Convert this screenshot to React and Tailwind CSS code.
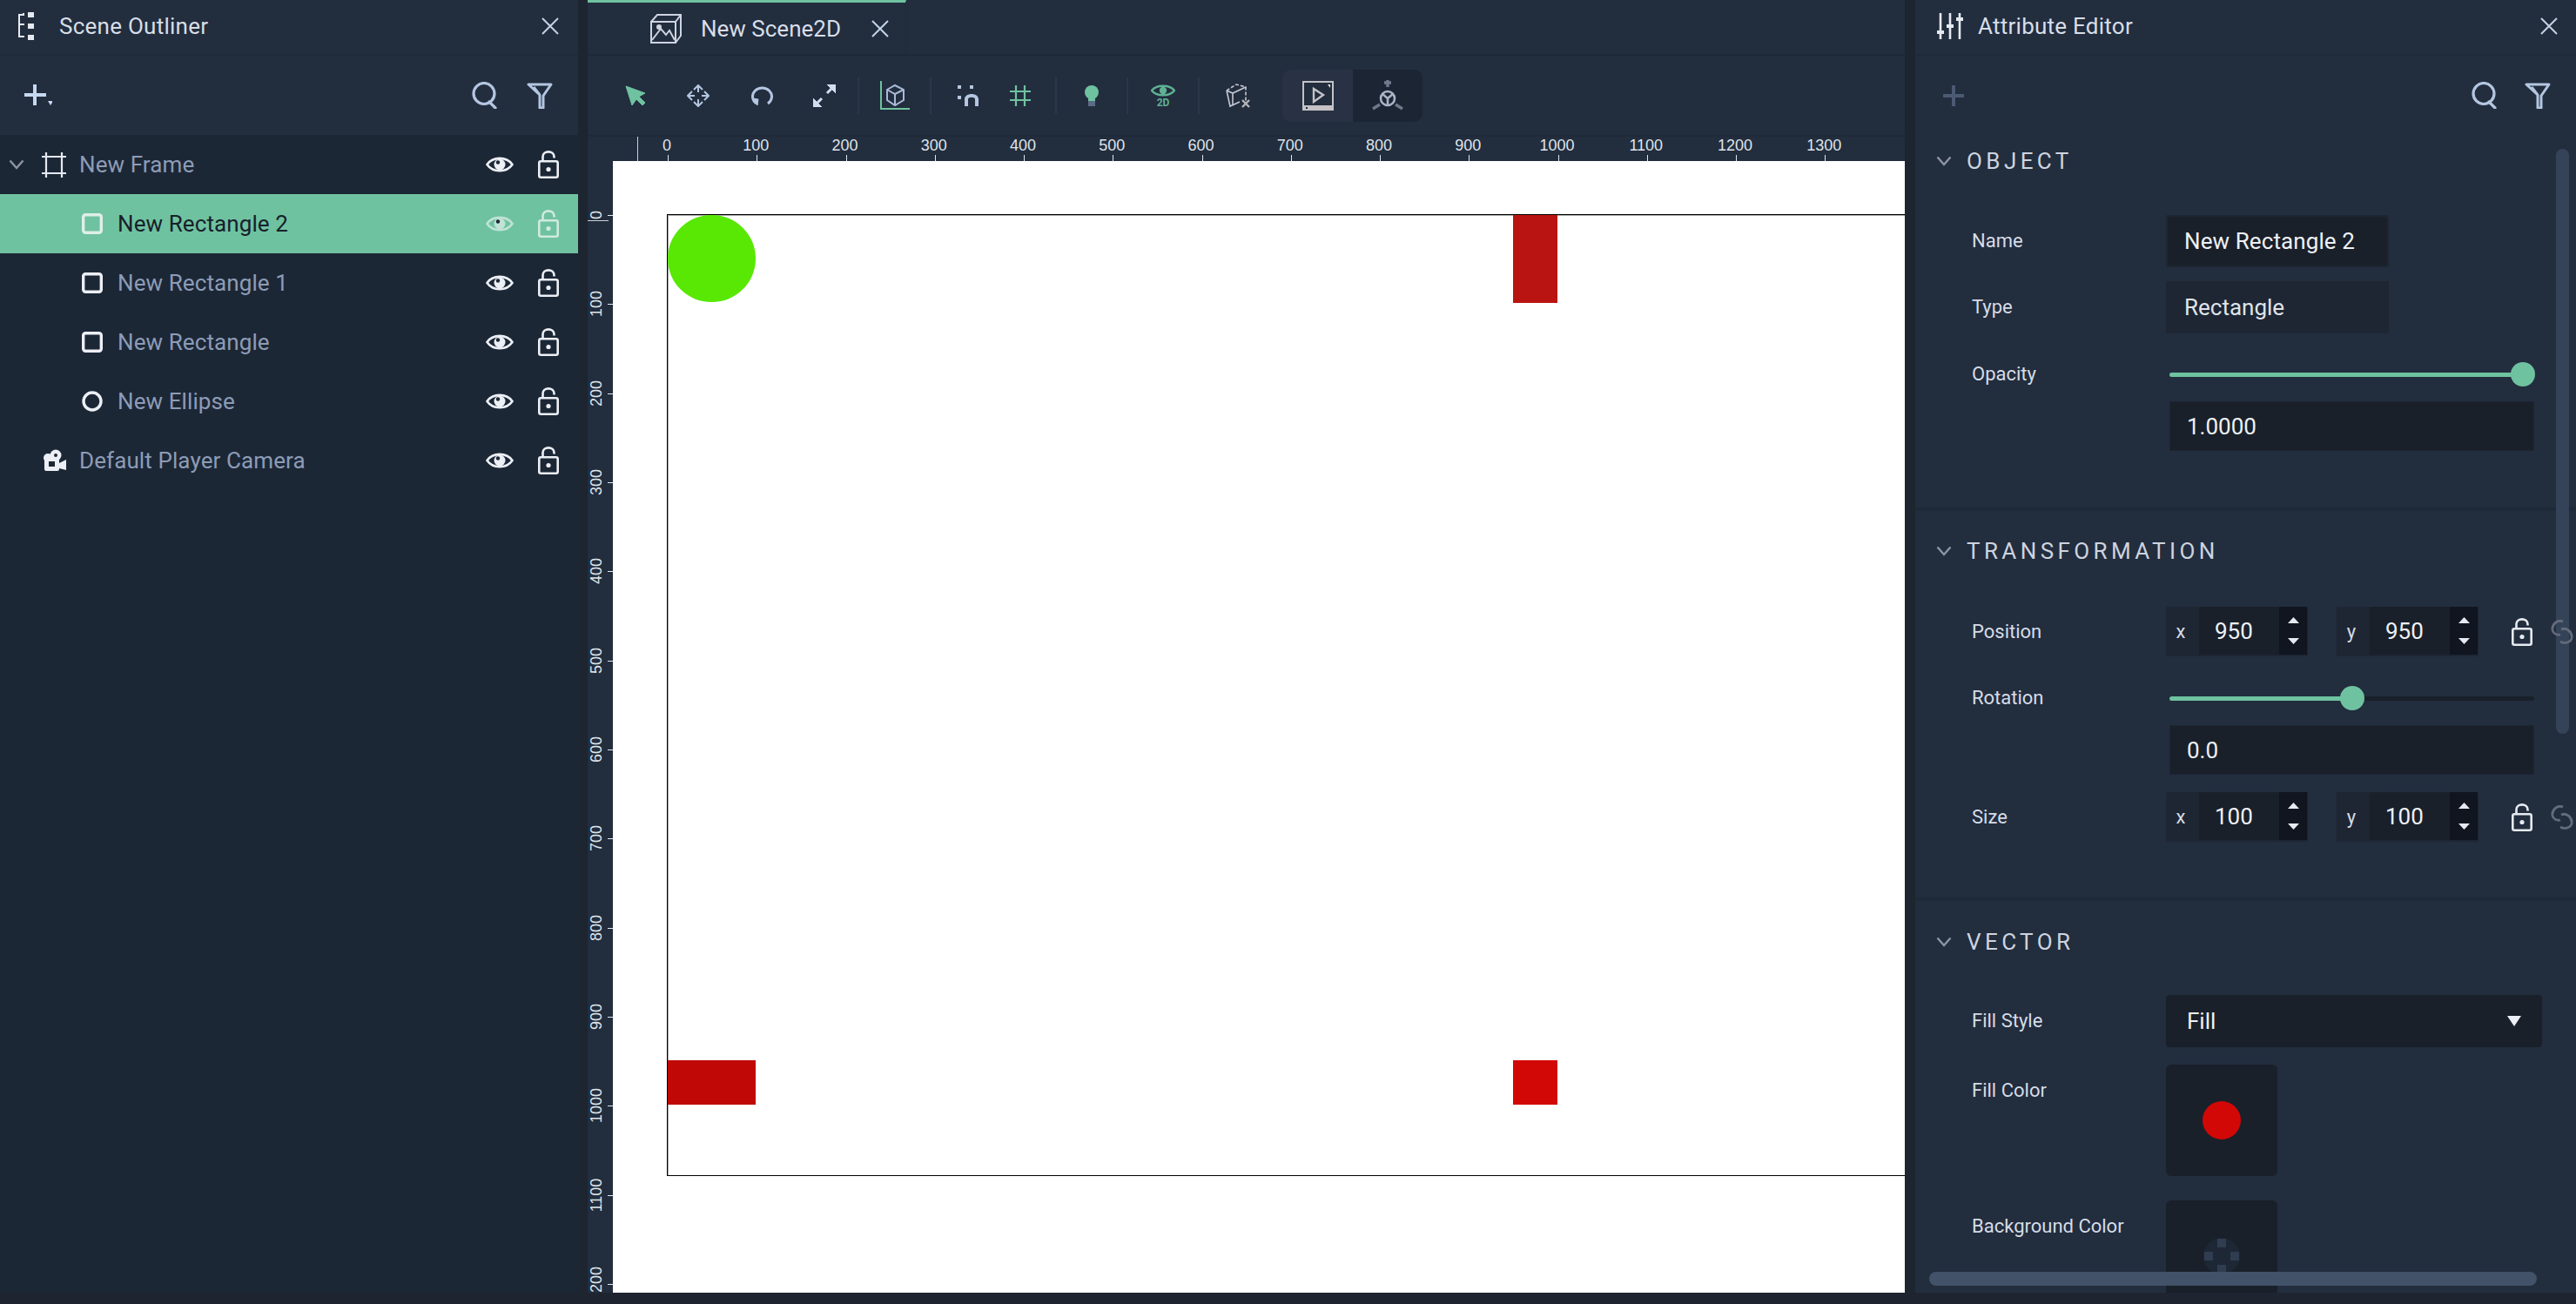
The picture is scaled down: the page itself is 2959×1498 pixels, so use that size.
import React from 'react';

const rulerX = [0, 100, 200, 300, 400, 500, 600, 700, 800, 900, 1000, 1100, 1200, 1300];
const rulerY = [0, 100, 200, 300, 400, 500, 600, 700, 800, 900, 1000, 1100, 1200];

function CloseIcon({ className }) {
    return (
        <svg width="22" height="20" viewBox="0 0 22 20" className={className} fill="none" stroke="currentColor" strokeWidth="2">
            <path d="M2 1 L20 19 M20 1 L2 19" />
        </svg>
    );
}

function SearchIcon() {
    return (
        <svg width="30" height="31" viewBox="0 0 30 31" fill="none" stroke="#b4c6e0" strokeWidth="3.2">
            <circle cx="14" cy="13.5" r="12" />
            <path d="M20 23 L27 30" strokeLinecap="round" />
        </svg>
    );
}

function FilterIcon() {
    return (
        <svg width="30" height="30" viewBox="0 0 30 30" fill="none" stroke="#b4c6e0" strokeWidth="3">
            <path d="M2 2 H28 L19 15 V29 H15 V14 Z M8 5 L15 14" strokeLinejoin="round" />
        </svg>
    );
}

function EyeIcon({ color = '#eceff5' }) {
    return (
        <svg width="32" height="22" viewBox="0 0 32 22" fill="none">
            <path d="M1.5 11 C8 1.5 24 1.5 30.5 11 C24 20.5 8 20.5 1.5 11 Z" stroke={color} strokeWidth="2.6" />
            <circle cx="16" cy="11" r="6.5" fill={color} />
            <circle cx="14" cy="8.5" r="2.2" fill="#1c2736" />
        </svg>
    );
}

function LockIcon({ color = '#eceff5' }) {
    return (
        <svg width="24" height="32" viewBox="0 0 24 32" fill="none">
            <path d="M5.5 12 V7 C5.5 -0.5 18.5 -0.5 18.5 7 V8.5" stroke={color} strokeWidth="2.6" />
            <rect x="1.3" y="12.3" width="21.4" height="18.4" rx="2" stroke={color} strokeWidth="2.6" />
            <circle cx="12" cy="21.5" r="2.6" fill={color} />
        </svg>
    );
}

function LinkIcon() {
    return (
        <svg width="26" height="28" viewBox="0 0 26 28" fill="none" stroke="#636b79" strokeWidth="2.8" className="relative z-10">
            <path d="M14 2 C7 -1 1 6 2 12 C3 16 7 18 11 17" />
            <path d="M12 11 C19 8 25 15 24 21 C23 26 16 28 11 25" />
        </svg>
    );
}

function Chevron({ color = '#8e95a3' }) {
    return (
        <svg width="18" height="12" viewBox="0 0 18 12" fill="none" stroke={color} strokeWidth="2.4">
            <path d="M1.5 1.5 L9 10 L16.5 1.5" />
        </svg>
    );
}

function RowIcon({ type, color }) {
    if (type === 'frame') {
        return (
            <svg width="28" height="29" viewBox="0 0 28 29" fill="none" stroke="#e4e8f0" strokeWidth="2.2">
                <path d="M5 0 V29 M23 0 V29 M0 5 H28 M0 24 H28" />
            </svg>
        );
    }
    if (type === 'camera') {
        return (
            <svg width="28" height="26" viewBox="0 0 28 26" fill="#eceff5">
                <circle cx="7" cy="10" r="5" />
                <circle cx="16" cy="7" r="6.5" />
                <rect x="3" y="11" width="17" height="14" rx="2" />
                <path d="M20 16 L28 12 V24 L20 22 Z" />
                <rect x="8" y="14" width="7" height="6" fill="#1c2736" />
                <circle cx="16" cy="7" r="2" fill="#1c2736" />
            </svg>
        );
    }
    if (type === 'ellipse') {
        return (
            <svg width="24" height="24" viewBox="0 0 24 24" fill="none" stroke={color} strokeWidth="3.4">
                <circle cx="12" cy="12" r="10" />
            </svg>
        );
    }
    return (
        <svg width="24" height="24" viewBox="0 0 24 24" fill="none" stroke={color} strokeWidth="3.4">
            <rect x="1.7" y="1.7" width="20.6" height="20.6" rx="2.5" />
        </svg>
    );
}

function OutlinerRow({ label, icon, indent, chevron, active }) {
    return (
        <div className={`flex items-center h-[68px] ${active ? 'bg-[#6fc2a0]' : ''}`}>
            <div className="w-[48px] flex justify-center pl-[1px] pr-[11px]">
                {chevron && <Chevron />}
            </div>
            <div className={`flex items-center ${indent ? 'pl-[46px] gap-[17px]' : 'gap-[15px]'}`}>
                <RowIcon type={icon} color={active ? '#dfeee8' : '#eceff5'} />
                <span className={`text-[26px] leading-none tracking-[0.1px] ${active ? 'text-[#17202b]' : 'text-[#8d9cb6]'}`}>{label}</span>
            </div>
            <div className="ml-auto flex items-center pr-[22px] gap-[28px]">
                <EyeIcon color={active ? '#bfe3d5' : '#eceff5'} />
                <LockIcon color={active ? '#cfeadf' : '#eceff5'} />
            </div>
        </div>
    );
}

function ScenePanel() {
    return (
        <div className="w-[664px] flex flex-col bg-[#1c2736]">
            <div className="h-[62px] flex items-center bg-[#222d3e] pb-[2px] pl-[20px] pr-[21px] shrink-0">
                <svg width="20" height="32" viewBox="0 0 20 32" fill="#e6eaf0">
                    <path d="M3 4 H8 V1 H6 V2 H1 V29 H8 V27 H3 V15 H8 V13 H3 Z" />
                    <rect x="12" y="0" width="7" height="6" />
                    <rect x="12" y="13" width="7" height="6" />
                    <rect x="12" y="26" width="7" height="6" />
                </svg>
                <span className="ml-[28px] text-[26px] leading-none tracking-[0.25px] text-[#d7dee8]">Scene Outliner</span>
                <CloseIcon className="ml-auto text-[#c3d2e6]" />
            </div>
            <div className="h-[93px] flex items-center bg-[#222d3e] border-t-2 border-[#202a39] pl-[28px] pr-[29px] gap-[33px] shrink-0">
                <svg width="32" height="26" viewBox="0 0 32 26" fill="#c6d9f2" className="mr-auto">
                    <path d="M10 0 H14 V10 H25 V14 H14 V24 H10 V14 H0 V10 H10 Z" />
                    <path d="M27 19 H33 L30 24 Z" />
                </svg>
                <SearchIcon />
                <FilterIcon />
            </div>
            <OutlinerRow label="New Frame" icon="frame" chevron />
            <OutlinerRow label="New Rectangle 2" icon="rect" indent active />
            <OutlinerRow label="New Rectangle 1" icon="rect" indent />
            <OutlinerRow label="New Rectangle" icon="rect" indent />
            <OutlinerRow label="New Ellipse" icon="ellipse" indent />
            <OutlinerRow label="Default Player Camera" icon="camera" />
        </div>
    );
}

function Tool({ className, children }) {
    return <div className={`flex items-center justify-center h-full ${className}`}>{children}</div>;
}

function Sep({ className = '' }) {
    return <div className={`w-[2px] h-[42px] bg-[#2b3648] ${className}`} />;
}

function Toolbar() {
    return (
        <div className="h-[93px] flex items-center bg-[#222d3e] border-t-2 border-[#1f2837] pl-[19px] shrink-0">
            <Tool className="w-[72px]">
                <svg width="24" height="24" viewBox="0 0 24 24" fill="#6fc2a0" stroke="#6fc2a0" strokeWidth="1">
                    <path d="M1 1 L23 9 L16 13 L23 20 L20 23 L13 16 L8 23 Z" />
                </svg>
            </Tool>
            <Tool className="w-[72px]">
                <svg width="26" height="26" viewBox="0 0 26 26" fill="none" stroke="#b4c6e0" strokeWidth="2">
                    <path d="M13 2 V9 M13 17 V24 M2 13 H9 M17 13 H24 M8 6 L13 1 L18 6 M8 20 L13 25 L18 20 M6 8 L1 13 L6 18 M20 8 L25 13 L20 18" />
                </svg>
            </Tool>
            <Tool className="w-[73px]">
                <svg width="26" height="24" viewBox="0 0 26 24" fill="none" stroke="#b4c6e0" strokeWidth="3">
                    <path d="M7 21 A11 10 0 1 1 20 21" />
                    <path d="M2 15 L9 16 L8 23 Z" fill="#b4c6e0" strokeWidth="1" />
                </svg>
            </Tool>
            <Tool className="w-[71px]">
                <svg width="26" height="26" viewBox="0 0 26 26" fill="#d0def2" stroke="#d0def2">
                    <path d="M16 0 H26 V10 Z" />
                    <path d="M0 16 V26 H10 Z" />
                    <path d="M22 4 L16 10 M4 22 L10 16" strokeWidth="3" />
                </svg>
            </Tool>
            <Sep className="ml-[3px]" />
            <Tool className="w-[81px]">
                <svg width="34" height="34" viewBox="0 0 34 34" fill="none">
                    <path d="M1 0 V32 H34" stroke="#6fc2a0" strokeWidth="2" />
                    <path d="M8 10 L17 5 L27 10 V22 L17 28 L8 22 Z M8 10 L17 15 L27 10 M17 15 V28" stroke="#a8bad6" strokeWidth="2" />
                </svg>
            </Tool>
            <Sep />
            <Tool className="w-[84px]">
                <svg width="24" height="24" viewBox="0 0 24 24" fill="#b4c6e0">
                    <rect x="0" y="0" width="4" height="4" />
                    <rect x="14" y="0" width="4" height="4" />
                    <rect x="0" y="12" width="4" height="4" />
                    <path d="M8 24 V16 C8 8 24 8 24 16 V24 H20 V16 C20 13 12 13 12 16 V24 Z" />
                </svg>
            </Tool>
            <Tool className="w-[36px]">
                <svg width="24" height="24" viewBox="0 0 24 24" fill="none" stroke="#6fc2a0" strokeWidth="2.2">
                    <path d="M7 0 V24 M17 0 V24 M0 7 H24 M0 17 H24" />
                </svg>
            </Tool>
            <Sep className="ml-[22px]" />
            <Tool className="w-[80px]">
                <svg width="16" height="24" viewBox="0 0 16 24">
                    <circle cx="8" cy="8" r="8" fill="#6fc2a0" />
                    <rect x="4" y="15" width="8" height="4" fill="#6fc2a0" />
                    <rect x="4" y="18" width="8" height="6" fill="#5c6b85" />
                </svg>
            </Tool>
            <Sep />
            <Tool className="w-[80px]">
                <div className="flex flex-col items-center">
                    <svg width="28" height="16" viewBox="0 0 28 16" fill="none" stroke="#5eb192" strokeWidth="2.4">
                        <path d="M1 8 C6 1 22 1 27 8 C22 15 6 15 1 8 Z" />
                        <circle cx="14" cy="8" r="3" fill="#5eb192" />
                    </svg>
                    <span className="text-[12px] leading-[12px] font-bold text-[#5eb192]">2D</span>
                </div>
            </Tool>
            <Sep />
            <Tool className="w-[88px]">
                <svg width="28" height="28" viewBox="0 0 28 28" fill="none" stroke="#c4c8d2" strokeWidth="1.6">
                    <path d="M1 8 L12 1 L23 4 V20" strokeDasharray="4 2" />
                    <path d="M1 8 L5 26 L16 21 M1 8 L8 11 L23 4 M8 11 V24" />
                    <path d="M19 19 L27 27 M27 19 L19 27" strokeWidth="2.4" stroke="#b5b5b8" />
                </svg>
            </Tool>
            <div className="ml-[7px] flex h-[60px] rounded-[10px] overflow-hidden">
                <Tool className="w-[81px] bg-[#283244]">
                    <svg width="36" height="34" viewBox="0 0 36 34">
                        <rect x="0" y="0" width="36" height="34" fill="#c4c2c6" />
                        <rect x="2" y="2" width="32" height="26" fill="#222d3e" />
                        <path d="M13 9 V24 L24 16 Z" fill="none" stroke="#c4c2c6" strokeWidth="2.4" />
                        <path d="M29 4 H32 V8 Z" fill="#e4e4e4" />
                        <rect x="4" y="30" width="2" height="2" fill="#222d3e" />
                    </svg>
                </Tool>
                <Tool className="w-[80px] bg-[#1c2533]">
                    <svg width="40" height="36" viewBox="0 0 40 36" fill="none" stroke="#aab2c6" strokeWidth="2.6">
                        <path d="M20 0 V8 M16 3 H24" stroke="#707b90" strokeWidth="3.4" />
                        <circle cx="20" cy="21" r="8" />
                        <path d="M20 21 V29 M20 21 L14 16 M20 21 L26 16" />
                        <path d="M11 28 L3 33 M29 28 L37 33" stroke="#70788a" strokeWidth="3.4" />
                    </svg>
                </Tool>
            </div>
        </div>
    );
}

function Canvas() {
    return (
        <div className="flex-1 flex flex-col min-h-0">
            <div className="h-[30px] flex shrink-0 bg-[#222d3e] border-t-2 border-[#1f2837]">
                <div className="w-[29px]" />
                <div className="relative flex-1 overflow-hidden">
                    <div className="absolute left-[28px] top-0 h-full w-[1px] bg-[#c9d0da]" />
                    {rulerX.map((n) => (
                        <div key={n} className="absolute top-0 h-full" style={{ left: 63 + n * 1.0225 }}>
                            <span className="absolute top-[1px] -left-[1px] -translate-x-1/2 text-[18px] leading-[18px] text-[#dfe4ea] font-['Liberation_Sans',sans-serif]">{n}</span>
                            <div className="absolute bottom-0 left-0 w-[1px] h-[7px] bg-[#e4e8ee]" />
                        </div>
                    ))}
                </div>
            </div>
            <div className="flex-1 flex min-h-0">
                <div className="relative w-[29px] bg-[#222d3e] overflow-hidden">
                    <div className="absolute left-0 top-[68px] w-[24px] h-[1px] bg-[#c9d0da]" />
                    {rulerY.map((n) => (
                        <div key={n} className="absolute left-0 w-full" style={{ top: 62 + n * 1.0233 }}>
                            <span className="absolute left-[10px] top-0 -translate-x-1/2 -translate-y-1/2 -rotate-90 text-[18px] leading-[18px] text-[#dfe4ea] font-['Liberation_Sans',sans-serif]">{n}</span>
                            <div className="absolute right-0 top-0 w-[6px] h-[1px] bg-[#e4e8ee]" />
                        </div>
                    ))}
                </div>
                <div className="relative flex-1 bg-white overflow-hidden">
                    <div className="absolute left-[62px] top-[61px] w-[1600px] h-[1105px] border border-black shadow-[inset_1px_1px_0_#a9a9a9]" />
                    <div className="absolute left-[63px] top-[62px] w-[101px] h-[100px] rounded-full bg-[#58e804]" />
                    <div className="absolute left-[1034px] top-[62px] w-[51px] h-[101px] bg-[#b91412]" />
                    <div className="absolute left-[63px] top-[1033px] w-[101px] h-[51px] bg-[#c00806]" />
                    <div className="absolute left-[1034px] top-[1033px] w-[51px] h-[51px] bg-[#d10805]" />
                </div>
            </div>
        </div>
    );
}

function CenterPanel() {
    return (
        <div className="flex-1 min-w-0 flex flex-col bg-[#222d3e]">
            <div className="h-[62px] flex shrink-0">
                <div className="w-[366px] border-t-[3px] border-[#6fc2a0] border-r border-r-[#1f2837] flex items-center pl-[72px]">
                    <svg width="36" height="34" viewBox="0 0 36 34" fill="none" stroke="#ced4e0" strokeWidth="2">
                        <path d="M1 9 H29 V33 H1 Z M1 9 L8 1 H35 V25 L29 33 M29 9 L35 1" />
                        <path d="M2 30 L12 17 L18 24 L22 19 L28 30" />
                        <circle cx="10" cy="15" r="2" fill="#ced4e0" />
                    </svg>
                    <span className="ml-[22px] text-[26px] leading-none text-[#d7dee8]">New Scene2D</span>
                    <CloseIcon className="ml-[34px] text-[#c3d2e6]" />
                </div>
            </div>
            <Toolbar />
            <Canvas />
        </div>
    );
}

function SectionTitle({ children }) {
    return (
        <div className="h-[60px] flex items-center pl-[24px]">
            <Chevron />
            <span className="ml-[17px] text-[26px] leading-none tracking-[4.4px] text-[#cdd4df]">{children}</span>
        </div>
    );
}

function AttrRow({ label, className = '', labelClass = 'items-center', children }) {
    return (
        <div className={`flex pl-[65px] ${labelClass} ${className}`}>
            <div className="w-[223px] text-[22px] leading-[30px] text-[#d6dce6] shrink-0">{label}</div>
            {children}
        </div>
    );
}

function Slider({ value, hasRest }) {
    return (
        <div className="relative ml-[4px] w-[419px] h-[28px] flex items-center">
            <div className="w-full h-[5px] rounded-full bg-[#19202a] overflow-hidden">
                <div className="h-full bg-[#6fc2a0]" style={{ width: `${value}%` }} />
            </div>
            <div className="absolute top-0 w-[28px] h-[28px] rounded-full bg-[#6fc2a0]" style={{ left: `${value}%`, marginLeft: hasRest ? -14 : -27 }} />
        </div>
    );
}

function ValueInput({ value }) {
    return (
        <div className="ml-[292px] w-[419px] h-[57px] flex items-center bg-[#19202a] pl-[19px] text-[26px] leading-none text-[#eef1f5] border border-[#1e2634]">
            {value}
        </div>
    );
}

function NumberBox({ axis, value, className = '' }) {
    return (
        <div className={`flex h-[57px] w-[163px] bg-[#1e2634] ${className}`}>
            <div className="w-[38px] flex items-center justify-center pr-[4px] text-[22px] leading-none text-[#d6dce6]">{axis}</div>
            <div className="w-[92px] h-[55px] flex items-center bg-[#19202a] pl-[18px] text-[26px] leading-none text-[#eef1f5]">{value}</div>
            <div className="w-[32px] h-[55px] flex flex-col items-center justify-between py-[12px] bg-[#10151f]">
                <svg width="13" height="7" viewBox="0 0 13 7" fill="#e6eaf0"><path d="M6.5 0 L13 7 H0 Z" /></svg>
                <svg width="13" height="7" viewBox="0 0 13 7" fill="#e6eaf0"><path d="M0 0 H13 L6.5 7 Z" /></svg>
            </div>
        </div>
    );
}

function VectorRow({ label, value, className }) {
    return (
        <AttrRow label={label} className={className}>
            <NumberBox axis="x" value={value} />
            <NumberBox axis="y" value={value} className="ml-[33px]" />
            <div className="ml-[38px] flex"><LockIcon color="#e6eaf0" /></div>
            <div className="ml-[21px] flex"><LinkIcon /></div>
        </AttrRow>
    );
}

function Divider() {
    return <div className="h-[4px] bg-[#1f2937] shrink-0" />;
}

function AttributePanel() {
    return (
        <div className="relative w-[759px] flex flex-col bg-[#222d3e] overflow-hidden">
            <div className="h-[62px] flex items-center pb-[2px] pl-[25px] pr-[20px] shrink-0">
                <svg width="30" height="30" viewBox="0 0 30 30" fill="none" stroke="#e6eaf0" strokeWidth="2.6">
                    <path d="M4 0 V30 M15 0 V30 M26 0 V30" />
                    <path d="M0 22 H8 M11 15 H19 M22 7 H30" strokeWidth="4" />
                </svg>
                <span className="ml-[17px] text-[26px] leading-none tracking-[0.25px] text-[#d7dee8]">Attribute Editor</span>
                <CloseIcon className="ml-auto text-[#c3d2e6]" />
            </div>
            <div className="h-[93px] flex items-center border-t-2 border-[#1f2937] pl-[32px] pr-[29px] gap-[31px] shrink-0">
                <svg width="24" height="24" viewBox="0 0 24 24" fill="#4a5a72" className="mr-auto">
                    <path d="M10 0 H14 V10 H24 V14 H14 V24 H10 V14 H0 V10 H10 Z" />
                </svg>
                <SearchIcon />
                <FilterIcon />
            </div>

            <div className="h-[428px] shrink-0">
                <SectionTitle>OBJECT</SectionTitle>
                <AttrRow label="Name" className="mt-[32px]">
                    <div className="w-[256px] h-[60px] flex items-center bg-[#19202a] border-2 border-[#1e2634] pl-[19px] text-[26px] leading-none tracking-[0.1px] text-[#eef1f5]">New Rectangle 2</div>
                </AttrRow>
                <AttrRow label="Type" className="mt-[16px]">
                    <div className="w-[256px] h-[60px] flex items-center bg-[#1e2634] pl-[21px] text-[26px] leading-none text-[#dfe4ea]">Rectangle</div>
                </AttrRow>
                <AttrRow label="Opacity" className="mt-[32px]">
                    <Slider value={100} />
                </AttrRow>
                <div className="mt-[16px]"><ValueInput value="1.0000" /></div>
            </div>
            <Divider />
            <div className="h-[444px] pt-[16px] shrink-0">
                <SectionTitle>TRANSFORMATION</SectionTitle>
                <VectorRow label="Position" value="950" className="mt-[34px]" />
                <AttrRow label="Rotation" className="mt-[33px]">
                    <Slider value={50} hasRest />
                </AttrRow>
                <div className="mt-[16px]"><ValueInput value="0.0" /></div>
                <VectorRow label="Size" value="100" className="mt-[20px]" />
            </div>
            <Divider />
            <div className="flex-1 min-h-0 pt-[17px]">
                <SectionTitle>VECTOR</SectionTitle>
                <AttrRow label="Fill Style" className="mt-[31px]">
                    <div className="w-[432px] h-[60px] flex items-center justify-between bg-[#19202a] rounded-[4px] pl-[24px] pr-[24px] text-[26px] leading-none text-[#eef1f5]">
                        Fill
                        <svg width="16" height="12" viewBox="0 0 16 12" fill="#eceff5"><path d="M0 0 H16 L8 12 Z" /></svg>
                    </div>
                </AttrRow>
                <AttrRow label={<div className="pt-[15px]">Fill Color</div>} labelClass="items-start" className="mt-[20px]">
                    <div className="w-[128px] h-[128px] flex items-center justify-center bg-[#19202a] rounded-[6px]">
                        <div className="w-[44px] h-[44px] rounded-full bg-[#d10805]" />
                    </div>
                </AttrRow>
                <AttrRow label={<div className="pt-[15px]">Background Color</div>} labelClass="items-start" className="mt-[28px]">
                    <div className="w-[128px] h-[128px] flex items-center justify-center bg-[#19202a] rounded-[6px]">
                        <div className="w-[42px] h-[42px] rounded-full flex items-center justify-center bg-[#1e2735]">
                            <div className="w-[40px] h-[40px] grid grid-cols-3 gap-[5px]">
                                {[0, 1, 2, 3, 4, 5, 6, 7, 8].map((i) => (
                                    <div key={i} className={i % 2 === 1 ? 'bg-[#303c4f]' : ''} />
                                ))}
                            </div>
                        </div>
                    </div>
                </AttrRow>
            </div>

            <div className="absolute left-[736px] top-[171px] w-[15px] h-[672px] rounded-full bg-[#354359]" />
            <div className="absolute left-[16px] top-[1461px] w-[698px] h-[16px] rounded-full bg-[#425268]" />
        </div>
    );
}

export default function App() {
    return (
        <div className="w-[2959px] h-[1498px] flex flex-col bg-[#1e2530] overflow-hidden font-['Roboto',sans-serif]">
            <div className="h-[1485px] flex">
                <ScenePanel />
                <div className="w-[11px] bg-[#1c2530]" />
                <CenterPanel />
                <div className="w-[12px] bg-[#1c2530]" />
                <AttributePanel />
            </div>
        </div>
    );
}
